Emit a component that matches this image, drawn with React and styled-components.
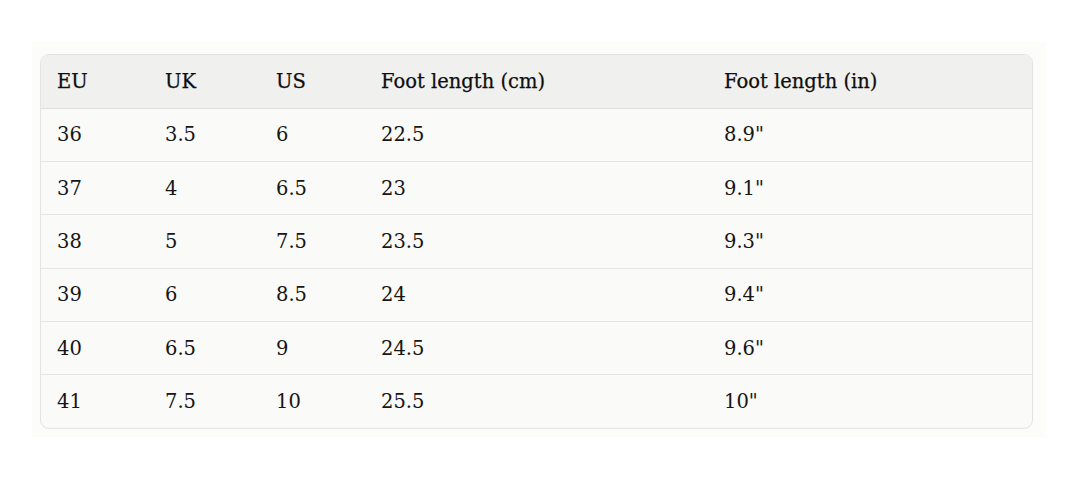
import React from 'react'
import styled, { createGlobalStyle } from 'styled-components';

const GlobalStyle = createGlobalStyle`
  html, body {
    margin: 0;
    padding: 0;
    background: #ffffff;
  }
`;

const Page = styled.div`
  padding: 42px 34px 0 32px;
`;

const Frame = styled.div`
  width: 1014px;
  box-sizing: border-box;
  padding: 12px 13px 8px 8px;
  background: #fcfcfb;
`;

const Card = styled.div`
  border: 1px solid #e3e3e0;
  border-radius: 9px;
  overflow: hidden;
  background: #fafaf9;
`;

const Table = styled.table`
  width: 100%;
  border-collapse: collapse;
  table-layout: fixed;
  font-family: "DejaVu Serif", "Liberation Serif", serif;
  font-size: 19.5px;
  color: #161615;
`;

const HeadRow = styled.tr`
  background: #f0f0ee;
  height: 53px;
`;

const Th = styled.th`
  text-align: left;
  font-weight: normal;
  color: #0e0e0d;
  -webkit-text-stroke: 0.25px #0e0e0d;
  padding: 0 16px;
  border-bottom: 1px solid #dededb;
`;

const Row = styled.tr`
  height: 53.4px;
  & + & td {
    border-top: 1px solid #e5e5e2;
  }
`;

const Td = styled.td`
  padding: 0 16px;
`;

const columns = [
  { label: 'EU', width: 108 },
  { label: 'UK', width: 111 },
  { label: 'US', width: 105 },
  { label: 'Foot length (cm)', width: 343 },
  { label: 'Foot length (in)' },
];

const sizes = [
  ['36', '3.5', '6', '22.5', '8.9"'],
  ['37', '4', '6.5', '23', '9.1"'],
  ['38', '5', '7.5', '23.5', '9.3"'],
  ['39', '6', '8.5', '24', '9.4"'],
  ['40', '6.5', '9', '24.5', '9.6"'],
  ['41', '7.5', '10', '25.5', '10"'],
];

const App = () => {
  return (
    <Page>
      <GlobalStyle />
      <Frame>
        <Card>
          <Table>
            <colgroup>
              {columns.map((col) => (
                <col key={col.label} style={col.width ? { width: col.width } : undefined} />
              ))}
            </colgroup>
            <thead>
              <HeadRow>
                {columns.map((col) => (
                  <Th key={col.label}>{col.label}</Th>
                ))}
              </HeadRow>
            </thead>
            <tbody>
              {sizes.map((row) => (
                <Row key={row[0]}>
                  {row.map((cell, i) => (
                    <Td key={i}>{cell}</Td>
                  ))}
                </Row>
              ))}
            </tbody>
          </Table>
        </Card>
      </Frame>
    </Page>
  )
}

export default App
